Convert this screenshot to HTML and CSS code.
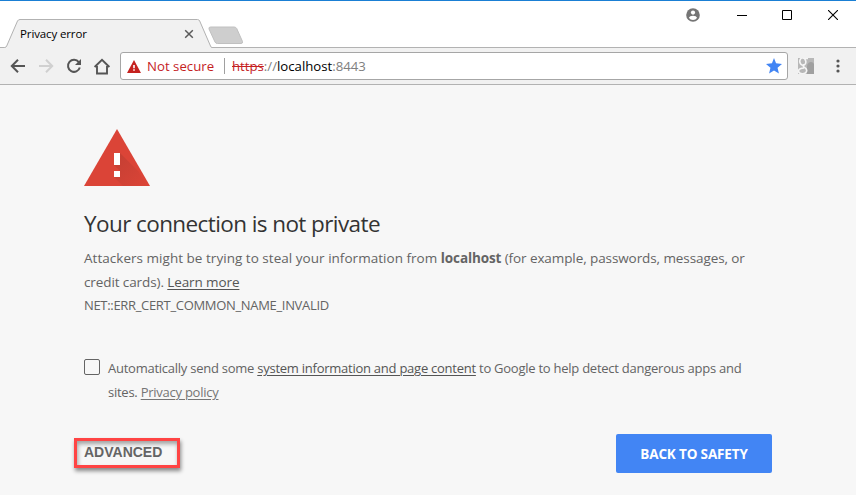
FILE: index.html
```html
<!DOCTYPE html>
<html lang="en">
<head>
<meta charset="utf-8">
<title>Privacy error</title>
<link rel="stylesheet" href="styles.css">
</head>
<body>
<div class="window">
  <header class="tabstrip">
    <div class="tab">
      <svg class="tab-shape" width="212" height="29" viewBox="0 0 212 29"><path d="M0 28.5H4.5Q6 28.5 6.700 27L17.500 2Q18.300.5 20 .5H197.500Q199 .5 199.700 2L210.500 27Q211 28.500 212 28.500V29H0Z" fill="#f1f1f1"/><path d="M0 28.500H4.500Q6 28.500 6.700 27L17.500 2Q18.300.5 20 .5H197.500Q199 .5 199.700 2L210.500 27Q211 28.500 212 28.500" fill="none" stroke="#b2b2b2"/></svg>
      <span class="tab-title">Privacy error</span>
      <svg class="tab-close" width="10" height="10" viewBox="0 0 10 10"><path d="M1.200 1.200l7.600 7.600M8.800 1.200L1.200 8.800" stroke="#5a5a5a" stroke-width="1.500"/></svg>
    </div>
    <svg class="new-tab" width="36" height="20" viewBox="0 0 36 20"><path d="M2.500 1H26Q28 1 28.700 2.500L34.500 15.500Q35 17.500 33 17.500H9.500Q7.700 17.500 7 16L1 3Q.5 1 2.500 1Z" fill="#cecece" stroke="#c0c0c0"/></svg>
    <div class="controls">
      <svg class="user" width="14" height="14" viewBox="0 0 14 14"><circle cx="7" cy="7" r="6.800" fill="#757575"/><circle cx="7" cy="4.600" r="2.100" fill="#fff"/><path d="M2.900 9.700Q3.600 7.800 7 7.800T11.100 9.700Q9.700 12 7 12T2.900 9.700Z" fill="#fff"/></svg>
      <svg class="min" width="10" height="10" viewBox="0 0 10 10"><path d="M0 5.500H10" stroke="#000"/></svg>
      <svg class="max" width="10" height="10" viewBox="0 0 10 10"><path d="M.5.5h9v9h-9z" fill="none" stroke="#000"/></svg>
      <svg class="close" width="10" height="10" viewBox="0 0 10 10"><path d="M0 0l10 10M10 0L0 10" stroke="#000" stroke-width="1.100"/></svg>
    </div>
  </header>
  <nav class="toolbar">
    <svg class="back" width="16" height="16" viewBox="0 0 16 16"><path d="M15 8H2M8 1.800L1.800 8L8 14.200" fill="none" stroke="#555" stroke-width="2"/></svg>
    <svg class="fwd" width="16" height="16" viewBox="0 0 16 16"><path d="M1 8H14M8 1.800L14.200 8L8 14.200" fill="none" stroke="#d0d0d0" stroke-width="2"/></svg>
    <svg class="reload" width="16" height="16" viewBox="0 0 16 16"><path d="M12.800 4.200A6 6 0 1 0 13.800 9.500" fill="none" stroke="#555" stroke-width="2"/><path d="M15 1V7H9Z" fill="#555"/></svg>
    <svg class="home" width="18" height="17" viewBox="0 0 18 17"><path d="M1.600 9L9 1.800L16.400 9M4 8V15.500H14V8" fill="none" stroke="#555" stroke-width="1.900"/></svg>
    <div class="omnibox">
      <svg class="warn" width="14" height="13" viewBox="0 0 14 13"><path d="M7 0L14 13H0Z" fill="#c5221f"/><path d="M6.200 5h1.600v3.300H6.200zM6.200 9.300h1.600v1.500H6.200z" fill="#fff"/></svg>
      <span class="not-secure">Not secure</span>
      <span class="divider"></span>
      <span class="url"><s>https</s>://<b>localhost</b>:8443</span>
      <svg class="star" width="16" height="16" viewBox="0 0 14 14"><path d="M7 0L8.800 4.700L14 5.200L10.100 8.500L11.300 13.600L7 10.900L2.700 13.600L3.900 8.500L0 5.200L5.200 4.700Z" fill="#4285f4"/></svg>
    </div>
    <svg class="ext" width="16" height="16" viewBox="0 0 16 16"><path d="M0 0H16V16H0Z" fill="#b8b8b8"/><path d="M9 8Q10 4 13 4Q15 4 16 6V16H9Z" fill="#a0a0a0"/><g fill="none" stroke="#f5f5f5"><ellipse cx="4.800" cy="3.600" rx="3" ry="3.600" stroke-width="1.600" transform="rotate(-12 4.800 3.600)"/><path d="M6 .4H10M6 6.500Q4.500 8 6 9Q9.500 11 8.500 13.500Q7.500 16 4 15.700Q.5 15.500 .5 13Q.8 10.300 6 10" stroke-width="1.600"/></g></svg>
    <svg class="menu" width="4" height="14" viewBox="0 0 4 14"><g fill="#555"><circle cx="2" cy="2" r="1.600"/><circle cx="2" cy="7" r="1.600"/><circle cx="2" cy="12" r="1.600"/></g></svg>
  </nav>
  <main class="page">
    <svg class="alert" width="66" height="58" viewBox="0 0 66 58"><defs><linearGradient id="shade" x1="0" y1="0" x2="1" y2="1"><stop offset="0" stop-color="#b93d31"/><stop offset="1" stop-color="#db4437"/></linearGradient></defs><path d="M33 0L66 57H0Z" fill="#db4437"/><path d="M36 24L54.500 42.500L63 57H39L30 48L36 42L30 36Z" fill="url(#shade)" opacity=".7"/><path d="M30 24h6v12h-6zM30 42h6v6h-6z" fill="#fff"/></svg>
    <h1><span>Your connection is not private</span></h1>
    <p class="lead"><span class="l1">Attackers might be trying to steal your information from <strong>localhost</strong><span class="tail"> (for example, passwords, messages, or</span></span><br><span class="l2">credit cards). <a>Learn more</a></span></p>
    <p class="code"><span>NET::ERR_CERT_COMMON_NAME_INVALID</span></p>
    <div class="optin">
      <span class="checkbox"></span>
      <p><span class="o1">Automatically send some <a>system information and page content</a> to Google to help detect dangerous apps and</span><br><span class="o2">sites. <a class="privacy">Privacy policy</a></span></p>
    </div>
    <div class="actions">
      <div class="advanced">ADVANCED</div>
      <div class="safety"><span>BACK TO SAFETY</span></div>
    </div>
  </main>
</div>
</body>
</html>
```
FILE: styles.css
```css
* { box-sizing: border-box; }
body { margin: 0; background: #f7f7f7; font-family: "Open Sans", "Noto Sans", sans-serif; color: #646464; }
svg { display: block; flex: none; }
p, h1 { margin: 0; font-weight: 400; white-space: nowrap; }
.window { width: 856px; height: 495px; overflow: hidden; }
.tabstrip { display: flex; align-items: flex-end; height: 48px; border-top: 1px solid #1a7fd4; background: linear-gradient(#b2b2b2, #b2b2b2) bottom / 100% 1px no-repeat #fff; }
.tab { display: grid; width: 212px; height: 29px; flex: none; }
.tab > * { grid-area: 1 / 1; }
.tab-title { margin: 6px 0 0 20px; font-size: 11.5px; line-height: 17px; letter-spacing: -0.12px; color: #000; }
.tab-close { margin: 10px 0 0 184px; }
.new-tab { margin: 0 0 2px -4px; }
.controls { display: flex; align-items: center; align-self: flex-start; margin: 7px 18px 0 auto; height: 14px; }
.min { margin-left: 37px; }
.max { margin-left: 35px; }
.close { margin-left: 36px; }
.toolbar { display: flex; align-items: center; height: 37px; padding-left: 10px; background: #f1f1f1; border-bottom: 1px solid #b2b2b2; }
.fwd { margin-left: 12px; }
.reload { margin-left: 12px; }
.home { margin-left: 11px; }
.omnibox { display: flex; align-items: center; width: 668px; height: 28px; margin-left: 9px; padding: 0 5px 0 6px; background: #fff; border: 1px solid #a6a6a6; border-radius: 3px; font-size: 13.2px; line-height: 20px; white-space: nowrap; }
.not-secure { margin-left: 6px; width: 77px; color: #c5221f; letter-spacing: 0.03px; }
.divider { width: 1px; height: 16px; background: #a0a0a0; }
.url { margin-left: 7px; color: #808080; letter-spacing: 0; }
.url s { color: #c5221f; }
.url b { font-weight: 400; color: #000; }
.star { margin-left: auto; }
.ext { margin-left: 10px; }
.menu { margin-left: 22px; }
.page { padding: 44px 84px 0; }
h1 { margin-top: 21px; font-size: 22.5px; line-height: 32px; color: #333; letter-spacing: -0.59px; }
.lead { margin-top: 6px; font-size: 13.5px; line-height: 24px; letter-spacing: 0.03px; }
.lead strong { font-weight: 700; letter-spacing: -0.12px; }
.tail { letter-spacing: -0.09px; }
.l2 { letter-spacing: -0.1px; }
a { color: #555; text-decoration: underline; text-underline-offset: 2px; text-decoration-thickness: 1px; }
.privacy { color: #757575; }
.code { font-size: 13px; line-height: 22px; letter-spacing: -0.32px; }
.optin { display: flex; margin-top: 40px; font-size: 13px; line-height: 24px; letter-spacing: -0.25px; }
.checkbox { width: 16px; height: 16px; margin: 3px 8px 0 0; border: 1px solid #646464; border-radius: 2px; flex: none; }
.actions { display: flex; align-items: flex-start; justify-content: space-between; margin: 30px 0 0 -10px; }
.advanced { width: 106px; height: 30px; margin-top: 4px; padding-left: 7px; border: 3px solid #ff4444; box-shadow: 1px 3px 4px rgba(0,0,0,.45), inset 1px 3px 4px rgba(0,0,0,.35); font: bold 14px/23px "Liberation Sans", sans-serif; }
.safety { width: 156px; height: 39px; background: #4285f4; border-radius: 2px; color: #fff; font-size: 13.5px; font-weight: 700; line-height: 40px; text-align: center; white-space: nowrap; letter-spacing: -0.15px; }
```
